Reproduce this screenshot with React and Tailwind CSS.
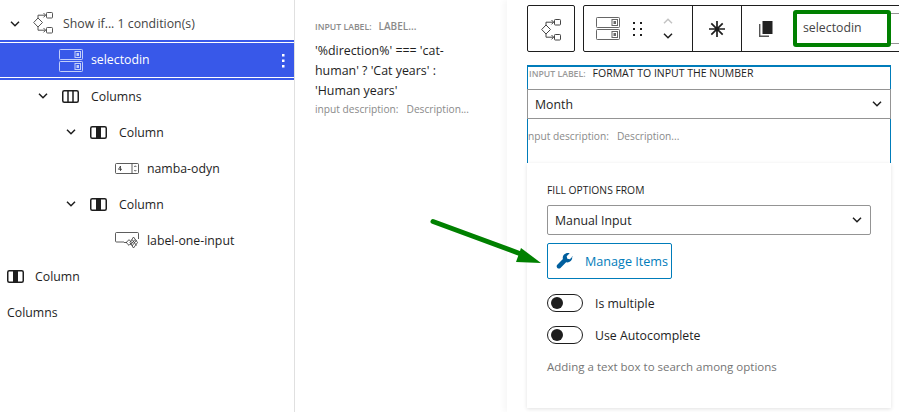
const F = "font-['Open_Sans','Noto_Sans',sans-serif]";

const Chevron = ({ className = "", up = false }) => (
  <svg width="10" height="6" viewBox="0 0 10 6" fill="none" stroke="currentColor" strokeWidth="1.5" className={className}>
    <path d={up ? "M1 5.2 5 1.2l4 4" : "M1 .8l4 4 4-4"} />
  </svg>
);

const Cond = ({ className = "" }) => (
  <svg width="21" height="24" viewBox="0 0 21 24" fill="none" stroke="currentColor" strokeWidth="1" className={className}>
    <rect x="13.5" y="2.500" width="6" height="5.500" rx=".8" />
    <rect x="13.5" y="17.500" width="6" height="5.500" rx=".8" />
    <path d="M5 8l4.500 4.500L5 17 .7 12.500z" />
    <path d="M5 8V5.200h7.500M10.500 3l2.200 2.200-2.200 2.200M5 17v3.200h7.500M10.500 18l2.200 2.200-2.200 2.200" />
  </svg>
);

const SelectIcon = ({ light = false }) => {
  const c = light ? "#c3cffa" : "#666";
  return (
    <svg width="24" height="23" viewBox="0 0 24 23" fill="none" stroke={c} strokeWidth="1">
      <rect x=".5" y=".5" width="23" height="10" rx=".8" />
      <rect x=".5" y="12.500" width="23" height="10" rx=".8" />
      <rect x="16" y="2.500" width="5.500" height="6" />
      <rect x="16" y="14.500" width="5.500" height="6" />
      <rect x="18" y="4.500" width="1.500" height="2" fill={c} />
      <rect x="18" y="16.500" width="1.500" height="2" fill={c} />
    </svg>
  );
};

const ColumnsIcon = () => (
  <svg width="17" height="13" viewBox="0 0 17 13" fill="none" stroke="#1e1e1e" strokeWidth="1.500">
    <rect x=".75" y=".75" width="15.500" height="11.500" rx="1.500" />
    <path d="M6 .7v11.600M11 .7v11.600" />
  </svg>
);

const ColumnIcon = () => (
  <svg width="17" height="13" viewBox="0 0 17 13" fill="none" stroke="#1e1e1e" strokeWidth="1.500">
    <rect x=".75" y=".75" width="15.500" height="11.500" rx="1.500" />
    <rect x="6" y=".7" width="5" height="11.600" fill="#1e1e1e" stroke="none" />
  </svg>
);

const NumberIcon = () => (
  <svg width="24" height="11" viewBox="0 0 24 11" fill="none" stroke="#333" strokeWidth=".8">
    <rect x=".5" y=".5" width="23" height="10" rx="1" />
    <path d="M17 .5v10" />
    <path d="M5.500 3v5M3.500 6.300l2-3.300M3.500 6.300h3.500M19.300 4l1-1.200 1 1.200M19.300 7l1 1.200 1-1.200" />
  </svg>
);

const LabelIcon = () => (
  <svg width="24" height="17" viewBox="0 0 24 17" fill="none" stroke="#333" strokeWidth=".8">
    <path d="M9 10H1.500a1 1 0 0 1-1-1V1.500a1 1 0 0 1 1-1h21a1 1 0 0 1 1 1V7" />
    <path d="M9 10.500h3" />
    <rect x="12" y="8.500" width="4" height="4" transform="rotate(45 14 10.500)" />
    <path d="M18.500 5l4 5.500-4 5.500-3.500-5.500zM17 7.500l4.500 6M20 7.500l-4.500 5.500M21.500 8l-4.500 6" />
  </svg>
);

const Row = ({ pad, chevron, icon, gap = "", children }) => (
  <div className={`flex h-9 items-center shrink-0 ${pad} text-[12.3px] text-[#1e1e1e]`}>
    {chevron && <Chevron className="mr-[14px] text-[#1e1e1e]" />}
    {icon}
    <span className={`${gap} pt-[2px]`}>{children}</span>
  </div>
);

const Toggle = ({ label }) => (
  <div className="flex items-center h-[18px]">
    <div className="w-9 h-[18px] rounded-full border border-[#1e1e1e] flex items-center pl-[3px]">
      <div className="w-[12px] h-[12px] rounded-full bg-[#1e1e1e]" />
    </div>
    <span className="ml-[12px] pt-[2px] text-[12.3px] text-[#1e1e1e]">{label}</span>
  </div>
);

export default function App() {
  return (
    <div className={`${F} relative flex w-[899px] h-[412px] overflow-hidden bg-white`}>
      {/* Left tree */}
      <div className="w-[295px] h-full shrink-0 border-r border-[#e0e0e0] pt-[8px] flex flex-col">
        <div className="flex h-[32px] items-center pl-[10px] text-[12.3px] text-[#444] shrink-0">
          <Chevron className="mr-[13px] text-[#1e1e1e]" />
          <Cond className="text-[#555] -mt-[5px]" />
          <span className="ml-[9px] pt-[1px]">Show if... 1 condition(s)</span>
        </div>
        <div className="h-10 shrink-0 bg-[#3858e9] border-y-2 border-[#3858e9] flex items-center pl-[59px] pr-[9px] pt-[1px] text-white text-[12.3px] relative">
          <div className="absolute left-0 right-0 top-[0px] h-[1px] bg-white" />
          <div className="absolute left-0 right-0 bottom-[0px] h-[1px] bg-white" />
          <SelectIcon light />
          <span className="ml-[8px] flex-1">selectodin</span>
          <svg width="4" height="16" viewBox="0 0 4 16" fill="white">
            <rect x="1" y="1" width="2.500" height="2.500" />
            <rect x="1" y="6.500" width="2.500" height="2.500" />
            <rect x="1" y="12" width="2.500" height="2.500" />
          </svg>
        </div>
        <div className="-mt-[2px] flex flex-col">
          <Row pad="pl-[38px]" chevron icon={<ColumnsIcon />} gap="ml-[12px]">Columns</Row>
          <Row pad="pl-[66px]" chevron icon={<ColumnIcon />} gap="ml-[12px]">Column</Row>
          <Row pad="pl-[115px]" icon={<NumberIcon />} gap="ml-[8px]">namba-odyn</Row>
          <Row pad="pl-[66px]" chevron icon={<ColumnIcon />} gap="ml-[12px]">Column</Row>
          <Row pad="pl-[115px]" icon={<LabelIcon />} gap="ml-[8px]">label-one-input</Row>
          <Row pad="pl-[7px]" icon={<ColumnIcon />} gap="ml-[11px]">Column</Row>
          <Row pad="pl-[7px]">Columns</Row>
        </div>
      </div>

      {/* Middle */}
      <div className="w-[212px] shrink-0 pl-[20px] pr-[32px] pt-[19px]">
        <div className="flex items-baseline text-[#8a8a8a] leading-[14px]">
          <span className="text-[8.700px] font-semibold">INPUT LABEL:</span>
          <span className="ml-[7px] text-[10px] font-semibold">LABEL...</span>
        </div>
        <p className="mt-[7px] text-[12.400px] leading-[20px] text-[#1e1e1e]">
          '%direction%' === 'cat-human' ? 'Cat years' : 'Human years'
        </p>
        <div className="flex items-baseline text-[10.200px] text-[#8a8a8a] leading-[16px]">
          <span>input description:</span>
          <span className="ml-[8px]">Description...</span>
        </div>
      </div>

      {/* Right */}
      <div className="flex-1 min-w-0 bg-white shadow-[-3px_0_6px_rgba(0,0,0,0.04)] pl-[20px] pt-[5px] flex flex-col">
        {/* Toolbar */}
        <div className="flex h-[47px] shrink-0 w-[400px]">
          <div className="w-[48px] h-full border border-[#1e1e1e] rounded-[2px] flex items-center justify-center text-[#444] shrink-0">
            <Cond />
          </div>
          <div className="ml-[8px] flex-1 border border-[#1e1e1e] rounded-[2px] flex items-stretch">
            <div className="w-[109px] border-r border-[#1e1e1e] flex items-center pl-[12px]">
              <SelectIcon />
              <svg width="10" height="16" viewBox="0 0 10 16" fill="#1e1e1e" className="ml-[13px]">
                <rect x="0" y="1" width="2" height="2" />
                <rect x="7" y="1" width="2" height="2" />
                <rect x="0" y="7" width="2" height="2" />
                <rect x="7" y="7" width="2" height="2" />
                <rect x="0" y="13" width="2" height="2" />
                <rect x="7" y="13" width="2" height="2" />
              </svg>
              <div className="ml-[20px] flex flex-col gap-[9px]">
                <Chevron up className="text-[#c4c4c4]" />
                <Chevron className="text-[#1e1e1e]" />
              </div>
            </div>
            <div className="w-[49px] border-r border-[#1e1e1e] flex items-center justify-center">
              <svg width="18" height="18" viewBox="0 0 18 18" stroke="#1e1e1e" strokeWidth="1.700">
                <path d="M9 1v16M1 9h16M3.300 3.300l11.400 11.400M14.700 3.300 3.300 14.700" />
              </svg>
            </div>
            <div className="flex items-center flex-1 pl-[17px]">
              <svg width="14" height="16" viewBox="0 0 14 16" fill="none">
                <rect x="3.500" y="0" width="10" height="13" fill="#222" />
                <path d="M.7 3v12.300H10" stroke="#555" strokeWidth="1.400" />
              </svg>
              <div className="ml-[20px] w-[98px] h-[37px] -mt-[1px] border-4 border-[#008000] rounded-[3px] flex items-center pl-[6px] text-[12.3px] text-[#444] shrink-0">
                selectodin
              </div>
              <div className="w-[8px] h-[31px] border-y border-[#949494] shrink-0" />
            </div>
          </div>
        </div>

        {/* Editor stack */}
        <div className="mt-[13px] w-[364px] shrink-0 flex flex-col">
          <div className="h-[24px] border-t-2 border-x border-[#007cba] flex items-start leading-[12px]">
            <span className="text-[8.700px] font-semibold text-[#999] ml-[1px] mt-[1px]">INPUT LABEL:</span>
            <span className="ml-[7px] text-[10.500px] font-medium text-[#1e1e1e]">FORMAT TO INPUT THE NUMBER</span>
          </div>
          <div className="h-[30px] border border-[#949494] flex items-center justify-between pl-[7px] pr-[8px] text-[12.3px] text-[#1e1e1e]">
            <span className="pt-[2px]">Month</span>
            <Chevron />
          </div>
          <div className="h-[44px] border-x border-[#007cba] pt-[9px] flex items-baseline text-[10.200px] text-[#8a8a8a] leading-[16px]">
            <span>nput description:</span>
            <span className="ml-[8px]">Description...</span>
          </div>
          {/* Card */}
          <div className="h-[245px] bg-white shadow-[0_1px_4px_rgba(0,0,0,0.12)] px-[20px] pt-[20px] flex flex-col">
            <div className="text-[10.300px] font-medium leading-[14px] text-[#1e1e1e]">FILL OPTIONS FROM</div>
            <div className="mt-[8px] h-[30px] w-[324px] border border-[#949494] rounded-[2px] flex items-center justify-between pl-[7px] pr-[8px] text-[12.3px] text-[#1e1e1e]">
              <span className="pt-[2px]">Manual Input</span>
              <Chevron />
            </div>
            <div className="mt-[8px] h-[36px] w-[125px] border border-[#007cba] rounded-[2px] flex items-center pl-[8px] text-[12.600px] text-[#007cba] whitespace-nowrap">
              <svg width="18" height="18" viewBox="0 0 18 18" fill="#005f9e" className="shrink-0">
                <path d="M16.800 4.300l-3 3-2.500-.6-.6-2.500 3-3c-2-.7-4.200-.2-5.600 1.300-1.200 1.200-1.600 3-1.200 4.600L1.300 12.700c-.9.900-.9 2.300 0 3.200.9.900 2.300.9 3.200 0l5.600-5.600c1.600.4 3.400 0 4.600-1.200 1.400-1.400 2-3.600 1.100-4.800z" />
              </svg>
              <span className="ml-[11px] pt-[2px]">Manage Items</span>
            </div>
            <div className="mt-[15px]"><Toggle label="Is multiple" /></div>
            <div className="mt-[14px]"><Toggle label="Use Autocomplete" /></div>
            <div className="mt-[15px] text-[11.500px] text-[#757575] leading-[16px]">Adding a text box to search among options</div>
          </div>
        </div>
      </div>

      {/* Annotation arrow */}
      <svg className="absolute left-[425px] top-[212px]" width="120" height="55" viewBox="0 0 120 55" fill="#008000">
        <path d="M8 9.500 L96 42" stroke="#008000" strokeWidth="5" strokeLinecap="round" />
        <path d="M116 51 L91 50 L96 36 Z" />
      </svg>
    </div>
  );
}
